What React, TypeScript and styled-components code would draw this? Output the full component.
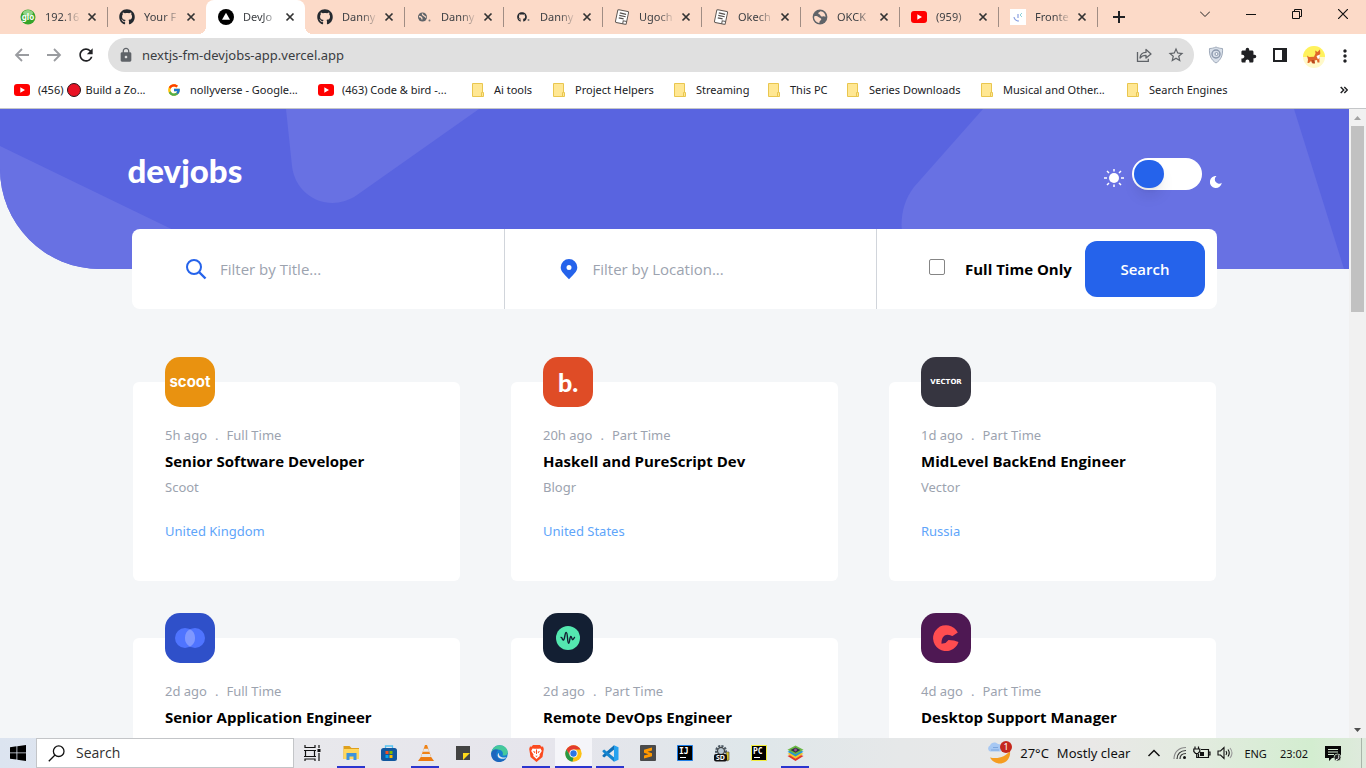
import React from "react";
import styled, { createGlobalStyle } from "styled-components";
import { FaGithub } from "react-icons/fa";
import { FcGoogle } from "react-icons/fc";
import { MdLock, MdRefresh, MdExtension, MdMoreVert, MdStarOutline } from "react-icons/md";

const GlobalStyle = createGlobalStyle`
  *, *::before, *::after { box-sizing: border-box; }
  body {
    margin: 0;
    overflow: hidden;
    font-family: "Noto Sans", "Open Sans", sans-serif;
    font-size: 13px;
    color: #202124;
  }
  button { border: 0; padding: 0; background: none; font: inherit; color: inherit; }
  a { color: inherit; text-decoration: none; }
  svg { display: block; flex: none; }
`;

const Desktop = styled.div`
  display: flex;
  flex-direction: column;
  height: 100vh;
`;

/* Browser: tab strip */

const TabStrip = styled.header`
  display: flex;
  align-items: center;
  flex: none;
  height: 34px;
  padding-left: 8px;
  background: #fcdac8;
`;

const Tab = styled.div<{ $active?: boolean; $divider?: boolean }>`
  position: relative;
  display: flex;
  align-items: center;
  flex: 0 1 99px;
  min-width: 0;
  height: 34px;
  padding: 0 9px 0 12px;
  border-radius: 8px 8px 0 0;
  background: ${(p) => (p.$active ? "#fff" : "transparent")};

  &::after {
    content: "";
    display: ${(p) => (p.$divider ? "block" : "none")};
    position: absolute;
    right: -1px;
    top: 7px;
    width: 1px;
    height: 20px;
    background: #a08d84;
  }
`;

const TabFlare = styled.span<{ $side: "left" | "right" }>`
  position: absolute;
  bottom: 0;
  ${(p) => p.$side}: -8px;
  width: 8px;
  height: 8px;
  background: radial-gradient(
    circle at ${(p) => p.$side} top,
    transparent 8px,
    #fff 8px
  );
`;

const TabIcon = styled.span`
  display: grid;
  place-items: center;
  flex: none;
  width: 16px;
  height: 16px;
`;

const TabTitle = styled.span`
  flex: 1;
  min-width: 0;
  margin: 0 2px 0 9px;
  overflow: hidden;
  white-space: nowrap;
  font-size: 11px;
  line-height: 18px;
  color: #3c3f43;
  mask-image: linear-gradient(to right, #000 50%, transparent 92%);
`;

const IconButton = styled.button<{ $size?: number }>`
  display: grid;
  place-items: center;
  flex: none;
  width: ${(p) => p.$size ?? 16}px;
  height: ${(p) => p.$size ?? 16}px;
`;

const NewTab = styled(IconButton)`
  margin-left: 14px;
`;

const WindowButtons = styled.div`
  display: flex;
  align-items: center;
  align-self: flex-start;
  height: 28px;
  margin-left: auto;
`;

const WindowButton = styled.button`
  display: grid;
  place-items: center;
  width: 46px;
  height: 28px;
`;

/* Browser: address bar and bookmarks */

const Toolbar = styled.div`
  display: flex;
  align-items: center;
  flex: none;
  height: 42px;
  padding: 0 13px 0 12px;
  background: #fff;
`;

const NavButtons = styled.div`
  display: flex;
  gap: 12px;
  margin-right: 12px;
`;

const AddressBar = styled.div`
  display: flex;
  align-items: center;
  flex: 1;
  height: 34px;
  padding: 0 9px 0 10px;
  border-radius: 17px;
  background: #e0e0e0;
  color: #5f6368;
`;

const Url = styled.input`
  flex: 1;
  min-width: 0;
  margin-left: 8px;
  padding: 0;
  border: 0;
  outline: 0;
  background: transparent;
  font: 13px/20px "Noto Sans", sans-serif;
  color: #3a3d42;
`;

const AddressActions = styled.div`
  display: flex;
  gap: 14px;
`;

const Extensions = styled.div`
  display: flex;
  gap: 14px;
  margin-left: 13px;
`;

const Bookmarks = styled.nav`
  display: flex;
  align-items: center;
  flex: none;
  height: 33px;
  padding: 0 14px 4px;
  border-bottom: 1px solid #c4c6c8;
  background: #fff;
`;

const Bookmark = styled.a<{ $width: number }>`
  display: flex;
  align-items: center;
  flex: 0 1 ${(p) => p.$width}px;
  min-width: 0;
  gap: 8px;
  white-space: nowrap;
  font-size: 11px;
  line-height: 16px;
`;

const BookmarkLabel = styled.span`
  display: flex;
  align-items: center;
  gap: 4px;
`;

const RedDot = styled.span`
  width: 14px;
  height: 14px;
  border: 1px solid #2c1416;
  border-radius: 50%;
  background: #e81224;
`;

const MoreBookmarks = styled.button`
  display: grid;
  place-items: center;
  width: 16px;
  height: 16px;
  margin-left: auto;
`;

/* Page */

const Viewport = styled.div`
  display: flex;
  flex: 1;
  min-height: 0;
`;

const Page = styled.main`
  flex: 1;
  min-width: 0;
  overflow: hidden;
  background: #f4f6f8;
`;

const Banner = styled.div`
  position: relative;
  height: 160px;
  padding: 39px 24px 0;
  overflow: hidden;
  border-bottom-left-radius: 100px;
  background: #5964e0;
`;

const BannerArt = styled.svg`
  position: absolute;
  inset: 0;
  width: 100%;
  height: 100%;
  fill: #6871e3;
`;

const BannerRow = styled.div`
  position: relative;
  display: flex;
  justify-content: space-between;
  max-width: 1094px;
  margin: 0 auto;
`;

const Brand = styled.a`
  font-family: Lato, sans-serif;
  font-size: 33px;
  font-weight: 900;
  line-height: 44px;
  color: #fff;
`;

const ThemeSwitch = styled.label`
  display: flex;
  align-items: flex-end;
  gap: 8px;
  height: 32px;
  margin-top: 10px;

  svg { margin-bottom: 2px; }
`;

const Switch = styled.input`
  appearance: none;
  display: flex;
  align-items: center;
  width: 70px;
  height: 32px;
  margin: 0;
  padding: 2px;
  border-radius: 16px;
  background: #fff;

  &::before {
    content: "";
    width: 30px;
    height: 28px;
    border-radius: 14px;
    background: #2563eb;
    box-shadow: 0 10px 15px -3px rgba(0, 0, 0, 0.1), 0 4px 6px -4px rgba(0, 0, 0, 0.1);
  }
`;

const Content = styled.div`
  position: relative;
  max-width: 1085px;
  margin: -40px auto 0;
`;

const FilterBar = styled.form`
  display: flex;
  height: 80px;
  border-radius: 8px;
  background: #fff;
`;

const FilterField = styled.label`
  display: flex;
  align-items: center;
  gap: 12px;
  flex: 1 1 372px;
  min-width: 0;
  padding-left: 52px;
  border-right: 1px solid #d1d5db;
`;

const FilterInput = styled.input`
  flex: 1;
  min-width: 0;
  padding: 0;
  border: 0;
  outline: 0;
  font: 15px/24px "Open Sans", sans-serif;

  &::placeholder { color: #9ca3af; opacity: 1; }
`;

const FilterActions = styled.div`
  display: flex;
  align-items: center;
  justify-content: space-between;
  flex: 0 0 340px;
  padding: 0 12px 0 52px;
`;

const FullTime = styled.label`
  display: flex;
  align-items: center;
  gap: 20px;
  font-family: "Open Sans", sans-serif;
  font-size: 15px;
  font-weight: 700;
  line-height: 24px;
  color: #000;
`;

const Checkbox = styled.input`
  appearance: none;
  width: 16px;
  height: 16px;
  margin: 0 0 4px;
  border: 1px solid #858585;
  border-radius: 2px;
  background: #fff;
`;

const SearchButton = styled.button`
  width: 120px;
  height: 56px;
  border-radius: 12px;
  background: #2563eb;
  font-family: "Open Sans", sans-serif;
  font-size: 15px;
  font-weight: 600;
  color: #fff;
`;

const JobGrid = styled.section`
  display: grid;
  grid-template-columns: repeat(3, 1fr);
  gap: 57px 51px;
  padding: 73px 1px 0;
`;

const JobCard = styled.article`
  position: relative;
  display: flex;
  flex-direction: column;
  align-items: flex-start;
  gap: 4px;
  padding: 43px 32px 40px;
  border-radius: 6px;
  background: #fff;
  font-size: 13px;
  line-height: 20px;
  color: #9ca3af;
`;

const CompanyLogo = styled.div<{ $color: string }>`
  position: absolute;
  top: -25px;
  left: 32px;
  display: grid;
  place-items: center;
  width: 50px;
  height: 50px;
  border-radius: 15px;
  background: ${(p) => p.$color};
  color: #fff;
`;

const Wordmark = styled.span<{ $size: number; $font: string; $weight: number }>`
  font-family: ${(p) => p.$font};
  font-size: ${(p) => p.$size}px;
  font-weight: ${(p) => p.$weight};
  line-height: 20px;
`;

const JobMeta = styled.div`
  display: flex;
  gap: 8px;
`;

const JobTitle = styled.h2`
  margin: 0;
  font-family: "Open Sans", sans-serif;
  font-size: 15px;
  font-weight: 700;
  line-height: 24px;
  color: #000;
`;

const Country = styled.span`
  margin-top: 20px;
  color: #60a5fa;
`;

const ScrollTrack = styled.div`
  display: flex;
  flex-direction: column;
  align-items: center;
  flex: none;
  width: 17px;
  background: #f1f1f1;
`;

const ScrollThumb = styled.div`
  width: 13px;
  height: 186px;
  margin-bottom: auto;
  background: #c1c1c1;
`;

/* Taskbar */

const Taskbar = styled.footer`
  display: flex;
  align-items: stretch;
  flex: none;
  height: 30px;
  background: linear-gradient(
    to right,
    #dce4f0 0,
    #e8e8ec 22%,
    #e6e5ec 40%,
    #dfe7ea 55%,
    #e6e8e9 66%,
    #e9e8e7 80%,
    #e2ebdf 88%,
    #d3edd0 96%,
    #dfeadd 100%
  );
  color: #111;
`;

const StartButton = styled(IconButton)`
  width: 36px;
  height: 30px;
`;

const TaskSearch = styled.label`
  display: flex;
  align-items: center;
  gap: 11px;
  flex: 0 1 258px;
  padding-left: 11px;
  border: 1px solid #c3c5c8;
  background: #fff;
`;

const TaskSearchInput = styled.input`
  width: 100%;
  padding: 0;
  border: 0;
  outline: 0;
  font: 14px/20px "Open Sans", sans-serif;

  &::placeholder { color: #303030; opacity: 1; }
`;

const TaskItem = styled.button<{ $state?: "open" | "focused" }>`
  position: relative;
  display: grid;
  place-items: center;
  flex: none;
  width: 37px;
  background: ${(p) => (p.$state === "focused" ? "#f5f5f9" : "transparent")};

  &::after {
    content: "";
    display: ${(p) => (p.$state ? "block" : "none")};
    position: absolute;
    bottom: 0;
    left: ${(p) => (p.$state === "focused" ? 0 : 4)}px;
    right: ${(p) => (p.$state === "focused" ? 0 : 5)}px;
    height: 2px;
    background: #2b35cf;
  }
`;

const TaskViewButton = styled(TaskItem)`
  margin-right: 2px;
`;

const Tray = styled.div`
  display: flex;
  align-items: center;
  margin-left: auto;
`;

const Weather = styled.button`
  display: flex;
  align-items: center;
  gap: 8px;
  margin-right: 16px;
  font-size: 13px;
`;

const TrayIcons = styled.div`
  display: flex;
  align-items: center;
  gap: 6px;
  margin-right: 10px;
`;

const TrayText = styled.span`
  margin-right: 13px;
  font-size: 11px;
`;

const Notifications = styled(IconButton)`
  margin-left: 4px;
  margin-right: 20px;
`;

const ShowDesktop = styled.button`
  align-self: stretch;
  width: 5px;
  border-left: 1px solid #aab5aa;
`;

/* Favicons and browser glyphs */

const YouTube = () => (
  <svg width="16" height="16" viewBox="0 0 16 16">
    <rect y="2" width="16" height="12" rx="3" fill="#f00" />
    <path d="M6.3 5.3v5.4L11 8z" fill="#fff" />
  </svg>
);

const Globe = () => (
  <svg width="16" height="16" viewBox="0 0 16 16">
    <circle cx="8" cy="8" r="7.4" fill="#5f6368" />
    <path
      d="M2.400 7.200c1.800-.4 3.200.2 4.400 1 1.200.9 2.700.9 2.500 2.100-.2 1.100-1.500 1.200-1.700 2.300l-.3 1.300C4.300 13.500 2.200 11 2.100 8.500z"
      fill="#fcdac8"
    />
    <path
      d="M8.600 2.300c-.9 1-2.200.8-2.300 2 0 1.300 1.600.8 2 1.900.3 1.100 1.500 1.500 2.600 1.200 1.200-.3 1.700.4 2.700.4-.2-2.900-2.100-5.300-5-5.500z"
      fill="#fcdac8"
    />
  </svg>
);

const Note = () => (
  <svg width="16" height="16" viewBox="0 0 16 16">
    <g transform="rotate(12 8 8)">
      <rect x="2.500" y="1.500" width="11" height="13" rx="1" fill="#fff" stroke="#5d5753" strokeWidth="1" />
      <path d="M5 4.500h6.500M5 7h6.500M5 9.500h5" stroke="#55504d" strokeWidth="1.200" />
      <path d="M10 14.500v-3h3.500" fill="none" stroke="#5d5753" />
    </g>
  </svg>
);

const Triangle = () => (
  <svg width="16" height="16" viewBox="0 0 16 16">
    <circle cx="8" cy="8" r="8" fill="#000" />
    <path d="M8 3.800 12 10.800H4z" fill="#fff" />
  </svg>
);

const Glo = () => (
  <svg width="16" height="16" viewBox="0 0 16 16">
    <circle cx="8" cy="8" r="7.500" fill="#35a42b" />
    <ellipse cx="8" cy="4" rx="5" ry="3" fill="#8fd486" />
    <text x="8" y="10.500" fontSize="8" fontWeight="700" textAnchor="middle" fill="#fff">glo</text>
  </svg>
);

const Mentor = () => (
  <svg width="16" height="16" viewBox="0 0 16 16">
    <rect width="16" height="16" fill="#fff" />
    <path d="M4 8c.5 3 2.500 4 5 4M8 5v4" fill="none" stroke="#8a9fe0" strokeWidth="1.200" />
    <path d="m12 4-2 2 2 2" fill="none" stroke="#8cd0d8" strokeWidth="1" />
  </svg>
);

const SmallGithub = () => (
  <svg width="16" height="16" viewBox="0 0 16 16">
    <FaGithub size={10} x={2} y={3} color="#24292f" />
    <circle cx="13.500" cy="11" r="1" fill="#777" />
  </svg>
);

const SmallGlobe = () => (
  <svg width="16" height="16" viewBox="0 0 16 16">
    <circle cx="6.500" cy="8" r="4.500" fill="#5f6368" />
    <path d="M3 7.500c2 0 3 1 3 3M6.500 4.500c-1 2 2 2 3.500 4" stroke="#fcdac8" fill="none" strokeWidth="1.300" />
    <circle cx="13.500" cy="11.500" r="1" fill="#777" />
  </svg>
);

const Cross = () => (
  <svg width="10" height="10" viewBox="0 0 10 10" stroke="#333" strokeWidth="1.700">
    <path d="m1.500 1.500 7 7m0-7-7 7" />
  </svg>
);

const Folder = () => (
  <svg width="16" height="16" viewBox="0 0 16 16">
    <path d="M2.500 1.500h10v9h1v4h-11z" fill="#ffe793" stroke="#e9c64f" />
    <path d="M11.500 14v-3.500h1" fill="none" stroke="#e9c64f" />
  </svg>
);

const Arrow = ({ back }: { back?: boolean }) => (
  <svg width="16" height="16" viewBox="0 0 16 16" fill="none" stroke="#9a9ca0" strokeWidth="1.800">
    <path d={back ? "M15 8H2M8 2 2 8l6 6" : "M1 8h13M8 2l6 6-6 6"} />
  </svg>
);

const Share = () => (
  <svg width="16" height="16" viewBox="0 0 16 16" fill="none" stroke="#5f6368" strokeWidth="1.300">
    <path d="M1.500 5v9.300h10.800v-2.500" />
    <path d="M4 11c.3-3.700 2.300-5.500 6-5.600V2.500L15 7l-5 4V8.300C7.500 8.300 5.500 9 4 11z" strokeLinejoin="round" />
  </svg>
);

const Shield = () => (
  <svg width="16" height="18" viewBox="0 0 16 18">
    <path d="M8 1c2 1 4.500 1.500 6.500 1.500C15 9 13 14 8 17 3 14 1 9 1.500 2.500 3.500 2.500 6 2 8 1z" fill="#d8dfe9" stroke="#9faaba" />
    <circle cx="8" cy="8" r="4" fill="none" stroke="#8b98ac" strokeWidth="1.400" />
    <circle cx="8.500" cy="8" r="1.500" fill="#f8fafd" stroke="#8b98ac" />
  </svg>
);

const SidePanel = () => (
  <svg width="14" height="14" viewBox="0 0 14 14">
    <path d="M1 1h12v12H1z" fill="none" stroke="#202124" strokeWidth="2" />
    <path d="M9 0h5v14H9z" fill="#202124" />
  </svg>
);

const Avatar = () => (
  <svg width="22" height="22" viewBox="0 0 22 22">
    <circle cx="11" cy="11" r="11" fill="#fff9c9" />
    <path d="M0 11a11 11 0 0 1 22 0z" fill="#fff25c" />
    <path d="M4 9.500 6 11l5-.3 1.500-3.200-.3-3 2.300 1.500L17 3.500l.3 4-1 3.500.2 5.500h-2l-.5-2.500-3 .5.5 2.500H9l-1-2-2 2H4.500l.5-3.500z" fill="#e0662a" />
    <path d="m13.500 10 3.500-1.500-.5 3-1.500 2z" fill="#fff" />
    <path d="M8.500 14h3l.5 3.500H9.500z" fill="#b8481c" />
  </svg>
);

/* Company logos */

const Circles = () => (
  <svg width="32" height="22" viewBox="0 0 32 22">
    <circle cx="11" cy="11" r="10" fill="#4f74ff" />
    <circle cx="21" cy="11" r="10" fill="#4f74ff" />
    <path d="M16 2.300a10 10 0 0 1 0 17.400 10 10 0 0 1 0-17.400z" fill="#7f98ff" />
  </svg>
);

const Pulse = () => (
  <svg width="24" height="24" viewBox="0 0 24 24">
    <circle cx="12" cy="12" r="12" fill="#54e8b0" />
    <path
      d="M4.500 11.500c1.500-1 2 3.200 3.200 2.500C9 13 8.700 6.500 10.200 6.500c1.700 0 1 10.800 2.400 10.800 1.200 0 1-6.500 2.200-6.800 1-.2 1 3.500 2 3.200.8-.3.900-2 2.200-2.500"
      fill="none"
      stroke="#131f33"
      strokeWidth="1.400"
    />
  </svg>
);

const OpenDisc = () => (
  <svg width="26" height="26" viewBox="0 0 26 26">
    <path
      d="M24.800 7.500A13 13 0 1 0 25.500 17L21 15.500 15.500 15l-1.500 1.500-1.500 1.500-4 .8C8.500 14 10 10 14.500 9.800c2.300 0 3.500 1.200 5 1.200z"
      fill="#ff4d50"
    />
  </svg>
);

/* Taskbar glyphs */

const Windows = () => (
  <svg width="16" height="16" viewBox="0 0 16 16" fill="#000">
    <path d="M0 2.200 6.500 1.300v6.200H0zM7.300 1.200 16 0v7.500H7.300zM0 8.300h6.500v6.300L0 13.700zM7.300 8.300H16V16l-8.700-1.200z" />
  </svg>
);

const Lens = () => (
  <svg width="17" height="17" viewBox="0 0 17 17" fill="none" stroke="#111" strokeWidth="1.300">
    <circle cx="10.700" cy="6.200" r="5.300" />
    <path d="M7 10 .8 16.200" />
  </svg>
);

const TaskView = () => (
  <svg width="17" height="16" viewBox="0 0 17 16" fill="none" stroke="#111" strokeWidth="1.200">
    <path d="M1 0v2.500h10V0M0 5.500h12M0 11.500h12M1.500 5.500v6M10.500 5.500v6M1 16v-2h10v2M15 0v3M15 8v8" />
    <path d="M13.500 4h3v3h-3z" fill="#111" stroke="none" />
  </svg>
);

const Explorer = () => (
  <svg width="17" height="16" viewBox="0 0 17 16">
    <path d="M.5 1h6l2 2H16v11H.5z" fill="#dfa01c" />
    <path d="M.5 4H16v10H.5z" fill="#ffd75e" />
    <path d="M3.500 15V8h10v7h-3v-3.500h-4V15z" fill="#3d93dd" />
  </svg>
);

const Store = () => (
  <svg width="16" height="16" viewBox="0 0 16 16">
    <path d="M4.500 4V1h7v3" fill="none" stroke="#55c3f2" strokeWidth="1.300" />
    <rect y="3" width="16" height="13" rx="2.500" fill="#11579f" />
    <path d="M4.500 6h3v3h-3z" fill="#f25022" />
    <path d="M8.500 6h3v3h-3z" fill="#7fba00" />
    <path d="M4.500 10h3v3h-3z" fill="#00a4ef" />
    <path d="M8.500 10h3v3h-3z" fill="#ffb900" />
  </svg>
);

const Cone = () => (
  <svg width="16" height="17" viewBox="0 0 16 17">
    <path d="M7 0h2l4.500 13h-11z" fill="#f08316" />
    <path d="m5.800 3.700-1 3h6.400l-1-3zM4 9l-1 3h10l-1-3z" fill="#e8e8e8" />
    <path d="M2.500 12.500h11L16 16H0z" fill="#ec7a10" />
  </svg>
);

const Sticky = () => (
  <svg width="14" height="14" viewBox="0 0 14 14">
    <path d="M0 0h14v14H0z" fill="#434343" />
    <path d="M7 7h7l-7 7z" fill="#ffd91a" />
  </svg>
);

const Edge = () => (
  <svg width="17" height="17" viewBox="0 0 17 17">
    <circle cx="8.500" cy="8.500" r="8.300" fill="#167fd0" />
    <path d="M.3 8C1 3 4.500.2 8.500.2c5 0 8.300 3.600 8.300 6.800 0 3-2.800 4-5.300 3.500 1-1.500.3-5.500-3.500-5.700C4.500 4.600 1.500 6 .3 8z" fill="#45c99b" />
    <path d="M.3 8C1.500 3.500 5.500 3.800 7.500 4.800 5 6 4.500 10 6.500 12.500 8.500 15 12 15.500 15 13.800 10 20-.8 17 .3 8z" fill="#1c66bd" />
    <path d="M8 8c-1 3 3 5.500 7.500 4.200-2 2.500-7 2-8.500-.5C6.300 10.300 6.800 8.500 8 8z" fill="#e6e8ee" />
  </svg>
);

const Brave = () => (
  <svg width="15" height="17" viewBox="0 0 15 17">
    <path d="M4 0h7l1.500 1.700 1.500-.2.800 2.500-1.300 8-6 5-6-5L.2 4 1 1.500l1.500.2z" fill="#fb4a1f" />
    <path d="m3.500 3.500 2 .3h4l2-.3L12.800 6l-2.300 3.500.3 1.500L7.500 14l-3.300-3 .3-1.500L2.200 6z" fill="#fff" />
    <path d="m3.800 6 2.700.7-.7 1.500zM11.200 6l-2.700.7.7 1.500zM6.200 10.800h2.600L7.500 12zM7 4.500h1V9H7z" fill="#fb4a1f" />
  </svg>
);

const Chrome = () => (
  <svg width="17" height="17" viewBox="0 0 17 17">
    <circle cx="8.500" cy="8.500" r="8.200" fill="#fbc116" />
    <path d="M1.400 4.400A8.200 8.200 0 0 1 15.600 4.400H8.500L5 10.500z" fill="#e33b2e" />
    <path d="M1.400 4.400 5 10.500l3.500 2-1 4.200A8.200 8.200 0 0 1 1.400 4.400z" fill="#279847" />
    <circle cx="8.500" cy="8.500" r="4.100" fill="#fff" />
    <circle cx="8.500" cy="8.500" r="3.200" fill="#2a75e6" />
  </svg>
);

const Code = () => (
  <svg width="17" height="17" viewBox="0 0 17 17">
    <path d="M12.500 4.300 2.200 12.400.5 11.200v-1L12 .3z" fill="#1070b8" />
    <path d="M12.500 12.700 2.200 4.600.5 5.800v1L12 16.700z" fill="#1485cf" />
    <path d="m12 .3 4.500 2v12.400l-4.500 2z" fill="#27a2ef" />
  </svg>
);

const Sublime = () => (
  <svg width="16" height="16" viewBox="0 0 16 16">
    <rect width="16" height="16" rx="1" fill="#4a4a4a" />
    <path d="m4 4.800 8-2.300v3L7.500 6.800 12 8.200v3L4 13.500v-3l4.500-1.300L4 7.800z" fill="#ff9800" />
  </svg>
);

const Ide = ({ label, edge }: { label: string; edge: string }) => (
  <svg width="16" height="16" viewBox="0 0 16 16">
    <path d="M.5.5h15v15H.5z" fill="#000" stroke={edge} />
    <text x="2" y="9" fontSize="8" fontWeight="700" fontFamily="DejaVu Sans Mono, monospace" fill="#fff">{label}</text>
    <path d="M3 12.500h6" stroke="#fff" />
  </svg>
);

const GearSd = () => (
  <svg width="17" height="17" viewBox="0 0 17 17">
    <circle cx="8" cy="6" r="4.500" fill="none" stroke="#4c5964" strokeWidth="3" strokeDasharray="2 1" />
    <circle cx="8" cy="6" r="3.500" fill="#b8c7d1" stroke="#333" />
    <path d="M13 7h3v8l-2 1z" fill="#d8c62a" stroke="#444" strokeWidth=".6" />
    <rect x="1" y="9" width="13" height="7.500" rx="2" fill="#111" />
    <text x="7.500" y="15.200" fontSize="7" fontWeight="700" textAnchor="middle" fill="#fff">SD</text>
  </svg>
);

const Layers = () => (
  <svg width="17" height="16" viewBox="0 0 17 16">
    <path d="m.5 11 8-3 8 3-8 5z" fill="#e0372c" />
    <path d="m.5 8.800 8-3 8 3-8 5z" fill="#f4c52a" />
    <path d="m.5 6.800 8-3 8 3-8 4.700z" fill="#2397d3" />
    <path d="M.5 4.800 8.500.5l8 4.300-8 4.700z" fill="#69b843" />
    <path d="m3.500 5 5-2.500 5 2.500-5 2.700z" fill="#323943" />
    <circle cx="8.500" cy="5" r="1.400" fill="#a04999" />
  </svg>
);

const WeatherIcon = () => (
  <svg width="24" height="24" viewBox="0 0 24 24">
    <path d="M22 10c1 7-4 12.500-10 12.500-4.500 0-8-2.500-10-6 9 2 15-1 20-6.500z" fill="#f59d20" />
    <path d="M2 10.500a3.300 3.300 0 0 1 0-6C3 1 8 .5 10 3c4-.5 6 6.500 2 7.500z" fill="#a7c8f3" />
    <path d="M3 9h8M5 6.500h5" stroke="#7da7de" />
    <circle cx="18" cy="6" r="6" fill="#c5281c" />
    <text x="18" y="9" fontSize="9" textAnchor="middle" fill="#fff">1</text>
  </svg>
);

const Chevron = () => (
  <svg width="21" height="16" viewBox="0 0 21 16" fill="none" stroke="#111" strokeWidth="1.500">
    <path d="m2.500 11 5.500-5.500 5.500 5.500" />
  </svg>
);

const Wifi = () => (
  <svg width="14" height="16" viewBox="0 0 14 16" fill="none" strokeWidth="1.200">
    <path d="M1 14C1 7 6 2.500 13 2.500" stroke="#888" />
    <path d="M4 14c0-5 3.500-8.500 9-8.500M7 14c0-3.500 2-5.500 6-5.500" stroke="#333" />
    <circle cx="11.500" cy="12.500" r="1.500" fill="#111" />
  </svg>
);

const Battery = () => (
  <svg width="18" height="16" viewBox="0 0 18 16" fill="none" stroke="#111" strokeWidth="1.200">
    <path d="M8 4.500h7.500v8h-10V9M15.500 7H17v3h-1.500M2 1.500V4M5.500 1.500V4M.8 4h6v2.500L5 8.500H2.500L.8 6.500zM3.700 8.500v4h2" />
    <path d="M7 7h4v4H7z" fill="#111" stroke="none" />
  </svg>
);

const Volume = () => (
  <svg width="17" height="16" viewBox="0 0 17 16" fill="none" stroke="#111" strokeWidth="1.100">
    <path d="M1 6v4h2.500L7 13.500v-11L3.500 6zM9 6q1.500 2 0 4M11 4.500q2.500 3.500 0 7" />
    <path d="M13 3q4 5 0 10" stroke="#999" />
  </svg>
);

const Messages = () => (
  <svg width="17" height="17" viewBox="0 0 17 17">
    <path d="M0 1h16v12H7l-3 3v-3H0z" fill="#080808" />
    <path d="M3 4.500h10M3 7h10M3 9.500h6" stroke="#d5ead2" />
    <circle cx="12.500" cy="12.500" r="3.500" fill="#222" stroke="#d5ead2" strokeWidth=".8" />
    <path d="M11 14.500c3 0 3-2 2.500-4" fill="none" stroke="#fff" />
  </svg>
);

/* Data */

const tabs = [
  { title: "192.16", icon: <Glo />, divider: true },
  { title: "Your F", icon: <FaGithub size={16} color="#24292f" /> },
  { title: "DevJo", icon: <Triangle />, active: true },
  { title: "Danny", icon: <FaGithub size={16} color="#24292f" />, divider: true },
  { title: "Danny", icon: <SmallGlobe />, divider: true },
  { title: "Danny", icon: <SmallGithub />, divider: true },
  { title: "Ugoch", icon: <Note />, divider: true },
  { title: "Okech", icon: <Note />, divider: true },
  { title: "OKCK", icon: <Globe />, divider: true },
  { title: "(959)", icon: <YouTube />, divider: true },
  { title: "Fronte", icon: <Mentor />, divider: true },
];

const bookmarks = [
  { label: <>(456) <RedDot /> Build a Zo...</>, icon: <YouTube />, width: 152 },
  { label: "nollyverse - Google...", icon: <FcGoogle size={14} />, width: 152 },
  { label: "(463) Code & bird -...", icon: <YouTube />, width: 152 },
  { label: "Ai tools", icon: <Folder />, width: 81 },
  { label: "Project Helpers", icon: <Folder />, width: 121 },
  { label: "Streaming", icon: <Folder />, width: 94 },
  { label: "This PC", icon: <Folder />, width: 79 },
  { label: "Series Downloads", icon: <Folder />, width: 134 },
  { label: "Musical and Other...", icon: <Folder />, width: 146 },
  { label: "Search Engines", icon: <Folder />, width: 122 },
];

const jobs = [
  {
    age: "5h ago", type: "Full Time", title: "Senior Software Developer", company: "Scoot", country: "United Kingdom",
    color: "#e99210", logo: <Wordmark $size={15} $weight={700} $font="Inter, sans-serif">scoot</Wordmark>,
  },
  {
    age: "20h ago", type: "Part Time", title: "Haskell and PureScript Dev", company: "Blogr", country: "United States",
    color: "#df4c26", logo: <Wordmark $size={25} $weight={900} $font="Lato, sans-serif">b.</Wordmark>,
  },
  {
    age: "1d ago", type: "Part Time", title: "MidLevel BackEnd Engineer", company: "Vector", country: "Russia",
    color: "#363540", logo: <Wordmark $size={7} $weight={700} $font="'DejaVu Sans', sans-serif">VECTOR</Wordmark>,
  },
  {
    age: "2d ago", type: "Full Time", title: "Senior Application Engineer", company: "Office Lite", country: "Japan",
    color: "#2f50c9", logo: <Circles />,
  },
  {
    age: "2d ago", type: "Part Time", title: "Remote DevOps Engineer", company: "Pod", country: "Thailand",
    color: "#131f33", logo: <Pulse />,
  },
  {
    age: "4d ago", type: "Part Time", title: "Desktop Support Manager", company: "Creative", country: "Germany",
    color: "#4e1853", logo: <OpenDisc />,
  },
];

const apps: { name: string; icon: React.ReactNode; state?: "open" | "focused" }[] = [
  { name: "File Explorer", icon: <Explorer />, state: "open" },
  { name: "Store", icon: <Store /> },
  { name: "VLC", icon: <Cone />, state: "open" },
  { name: "Sticky Notes", icon: <Sticky /> },
  { name: "Edge", icon: <Edge /> },
  { name: "Brave", icon: <Brave />, state: "open" },
  { name: "Chrome", icon: <Chrome />, state: "focused" },
  { name: "VS Code", icon: <Code />, state: "open" },
  { name: "Sublime Text", icon: <Sublime /> },
  { name: "IntelliJ", icon: <Ide label="IJ" edge="#1f7fe8" /> },
  { name: "SD", icon: <GearSd /> },
  { name: "PyCharm", icon: <Ide label="PC" edge="#f3ee3c" /> },
  { name: "BlueStacks", icon: <Layers />, state: "open" },
];

export default function App() {
  return (
    <>
      <GlobalStyle />
      <Desktop>
        <TabStrip>
          {tabs.map((tab, i) => (
            <Tab key={i} $active={tab.active} $divider={tab.divider}>
              {tab.active && <TabFlare $side="left" />}
              {tab.active && <TabFlare $side="right" />}
              <TabIcon>{tab.icon}</TabIcon>
              <TabTitle>{tab.title}</TabTitle>
              <IconButton $size={12} aria-label="Close tab"><Cross /></IconButton>
            </Tab>
          ))}
          <NewTab aria-label="New tab">
            <svg width="12" height="12" viewBox="0 0 12 12" stroke="#202124" strokeWidth="2"><path d="M6 0v12M0 6h12" /></svg>
          </NewTab>
          <WindowButtons>
            <WindowButton aria-label="Search tabs">
              <svg width="10" height="10" viewBox="0 0 10 10" fill="none" stroke="#222"><path d="m0 2.500 5 5 5-5" /></svg>
            </WindowButton>
            <WindowButton aria-label="Minimize">
              <svg width="10" height="10" viewBox="0 0 10 10" stroke="#111"><path d="M0 5.500h10" /></svg>
            </WindowButton>
            <WindowButton aria-label="Restore">
              <svg width="10" height="10" viewBox="0 0 10 10" fill="none" stroke="#111"><path d="M.5 2.500h7v7h-7zM2.500 2.500v-2h7v7h-2" /></svg>
            </WindowButton>
            <WindowButton aria-label="Close">
              <svg width="10" height="10" viewBox="0 0 10 10" stroke="#111" strokeWidth="1.200"><path d="m0 0 10 10m0-10L0 10" /></svg>
            </WindowButton>
          </WindowButtons>
        </TabStrip>

        <Toolbar>
          <NavButtons>
            <IconButton $size={20} aria-label="Back"><Arrow back /></IconButton>
            <IconButton $size={20} aria-label="Forward"><Arrow /></IconButton>
            <IconButton $size={20} aria-label="Reload"><MdRefresh size={20} /></IconButton>
          </NavButtons>
          <AddressBar>
            <MdLock size={16} />
            <Url aria-label="Address" defaultValue="nextjs-fm-devjobs-app.vercel.app" />
            <AddressActions>
              <IconButton $size={18} aria-label="Share"><Share /></IconButton>
              <IconButton $size={18} aria-label="Bookmark"><MdStarOutline size={18} /></IconButton>
            </AddressActions>
          </AddressBar>
          <Extensions>
            <IconButton $size={18} aria-label="Shield"><Shield /></IconButton>
            <IconButton $size={18} aria-label="Extensions"><MdExtension size={17} /></IconButton>
            <IconButton $size={18} aria-label="Side panel"><SidePanel /></IconButton>
            <IconButton $size={18} aria-label="Profile"><Avatar /></IconButton>
            <IconButton $size={18} aria-label="Menu"><MdMoreVert size={20} /></IconButton>
          </Extensions>
        </Toolbar>

        <Bookmarks>
          {bookmarks.map((b, i) => (
            <Bookmark key={i} href="#" $width={b.width}>
              <TabIcon>{b.icon}</TabIcon>
              <BookmarkLabel>{b.label}</BookmarkLabel>
            </Bookmark>
          ))}
          <MoreBookmarks aria-label="More bookmarks">
            <svg width="8" height="8" viewBox="0 0 8 8" fill="none" stroke="#202124" strokeWidth="1.500">
              <path d="m.7 1 3 3-3 3M4.300 1l3 3-3 3" />
            </svg>
          </MoreBookmarks>
        </Bookmarks>

        <Viewport>
          <Page>
            <Banner>
              <BannerArt viewBox="0 0 1349 160" preserveAspectRatio="none">
                <path d="M0 37 254 160H0z" />
                <path d="m286 0 6 57c4 33 39 47 65 29L479 0z" />
                <path d="m983 0-69 78c-14 18-16 42-7 67l8 15h429L1294 0z" />
              </BannerArt>
              <BannerRow>
                <Brand href="#">devjobs</Brand>
                <ThemeSwitch>
                  <svg width="20" height="20" viewBox="0 0 20 20" fill="#fff" stroke="#fff" strokeWidth="1.500">
                    <circle cx="10" cy="10" r="5" stroke="none" />
                    <path d="M10 1v2.500M10 16.500V19M0 10h3M17 10h3M3 3l2 2M15 15l2 2M3 17l2-2M15 5l2-2" />
                  </svg>
                  <Switch type="checkbox" role="switch" aria-label="Dark mode" />
                  <svg width="12" height="12" viewBox="0 0 12 12">
                    <path d="M6.500 0a4.300 4.300 0 1 0 5.300 6.800A6 6 0 1 1 6.500 0z" fill="#fff" />
                  </svg>
                </ThemeSwitch>
              </BannerRow>
            </Banner>

            <Content>
              <FilterBar>
                <FilterField>
                  <svg width="24" height="24" viewBox="0 0 24 24" fill="none" stroke="#2563eb" strokeWidth="2">
                    <circle cx="10" cy="10" r="7" />
                    <path d="m15 15 6.500 6.500" strokeWidth="2.400" />
                  </svg>
                  <FilterInput aria-label="Title" placeholder="Filter by Title..." />
                </FilterField>
                <FilterField>
                  <svg width="24" height="24" viewBox="0 0 24 24">
                    <path d="M12 2a8.300 8.300 0 0 0-8.300 8.300c0 4.500 4.500 7.700 8.300 12 3.800-4.300 8.300-7.500 8.300-12A8.300 8.300 0 0 0 12 2zm0 6a2.500 2.500 0 1 1 0 5 2.500 2.500 0 0 1 0-5z" fill="#2563eb" />
                  </svg>
                  <FilterInput aria-label="Location" placeholder="Filter by Location..." />
                </FilterField>
                <FilterActions>
                  <FullTime>
                    <Checkbox type="checkbox" />
                    Full Time Only
                  </FullTime>
                  <SearchButton type="button">Search</SearchButton>
                </FilterActions>
              </FilterBar>

              <JobGrid>
                {jobs.map((job) => (
                  <JobCard key={job.title}>
                    <CompanyLogo $color={job.color}>{job.logo}</CompanyLogo>
                    <JobMeta>
                      <span>{job.age}</span>
                      <span>.</span>
                      <span>{job.type}</span>
                    </JobMeta>
                    <JobTitle>{job.title}</JobTitle>
                    <span>{job.company}</span>
                    <Country>{job.country}</Country>
                  </JobCard>
                ))}
              </JobGrid>
            </Content>
          </Page>
          <ScrollTrack>
            <svg width="17" height="17" viewBox="0 0 17 17"><path d="M5 11h7L8.500 7z" fill="#a3a3a3" /></svg>
            <ScrollThumb />
            <svg width="17" height="17" viewBox="0 0 17 17"><path d="M5 7h7l-3.500 4z" fill="#505050" /></svg>
          </ScrollTrack>
        </Viewport>

        <Taskbar>
          <StartButton aria-label="Start"><Windows /></StartButton>
          <TaskSearch>
            <Lens />
            <TaskSearchInput aria-label="Search this computer" placeholder="Search" />
          </TaskSearch>
          <TaskViewButton aria-label="Task view"><TaskView /></TaskViewButton>
          {apps.map((app) => (
            <TaskItem key={app.name} aria-label={app.name} $state={app.state}>{app.icon}</TaskItem>
          ))}
          <Tray>
            <Weather>
              <WeatherIcon />
              <span>27°C</span>
              <span>Mostly clear</span>
            </Weather>
            <TrayIcons>
              <Chevron />
              <Wifi />
              <Battery />
              <Volume />
            </TrayIcons>
            <TrayText>ENG</TrayText>
            <TrayText>23:02</TrayText>
            <Notifications aria-label="Notifications"><Messages /></Notifications>
            <ShowDesktop aria-label="Show desktop" />
          </Tray>
        </Taskbar>
      </Desktop>
    </>
  );
}
